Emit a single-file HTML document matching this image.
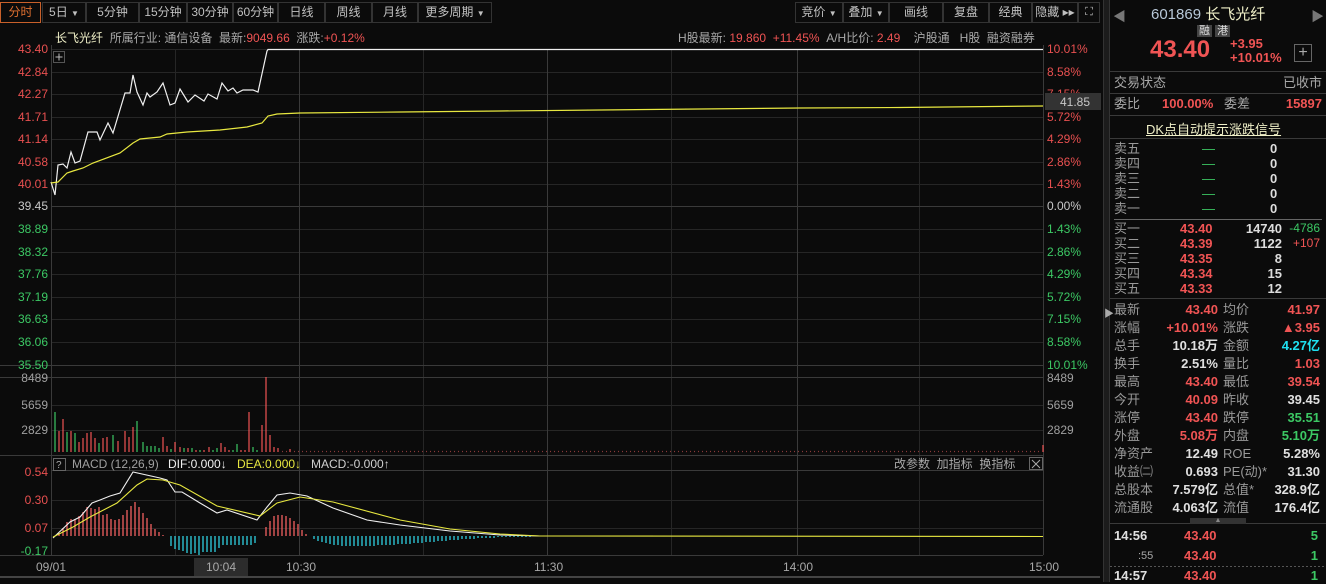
<!DOCTYPE html>
<html><head><meta charset="utf-8"><style>
*{margin:0;padding:0;box-sizing:border-box}
body{width:1326px;height:582px;background:#0b0b0b;overflow:hidden;font-family:"Liberation Sans","Noto Sans CJK SC",sans-serif;font-size:12px;color:#c8c8c8;position:relative}
.abs{position:absolute;white-space:nowrap}
.tab{position:absolute;top:2px;height:21px;border:1px solid #333;color:#c0c0c0;font-size:12px;line-height:19px;text-align:center}
.r{color:#f05454}.g{color:#3cc864}.c{color:#1fe0f0}.w{color:#e0e0e0}.gy{color:#a8a8a8}
#rp .row{position:absolute;left:1114px;width:208px;height:16px;font-size:13px;line-height:16px}
#rp .row span{position:absolute}
.hl{position:absolute;left:1110px;width:216px;height:1px;background:#3a3a3a}
</style></head><body>
<!-- toolbar -->
<div class="tab" style="left:0;width:41px;border-color:#c8602a;color:#e07030">分时</div>
<div class="tab" style="left:42px;width:44px">5日 <span style="font-size:8px">▼</span></div>
<div class="tab" style="left:86px;width:53px">5分钟</div>
<div class="tab" style="left:139px;width:48px">15分钟</div>
<div class="tab" style="left:187px;width:46px">30分钟</div>
<div class="tab" style="left:233px;width:45px">60分钟</div>
<div class="tab" style="left:278px;width:47px">日线</div>
<div class="tab" style="left:325px;width:47px">周线</div>
<div class="tab" style="left:372px;width:46px">月线</div>
<div class="tab" style="left:418px;width:74px">更多周期 <span style="font-size:8px">▼</span></div>
<div class="tab" style="left:795px;width:48px">竞价 <span style="font-size:8px">▼</span></div>
<div class="tab" style="left:843px;width:46px">叠加 <span style="font-size:8px">▼</span></div>
<div class="tab" style="left:889px;width:54px">画线</div>
<div class="tab" style="left:943px;width:46px">复盘</div>
<div class="tab" style="left:989px;width:43px">经典</div>
<div class="tab" style="left:1032px;width:46px">隐藏 ▸▸</div>
<div class="tab" style="left:1078px;width:22px;font-size:11px">⛶</div>
<!-- info row -->
<div class="abs" style="left:55px;top:29px;font-size:12px"><span style="color:#f0f0c8">长飞光纤</span> &nbsp;<span class="gy">所属行业: 通信设备 &nbsp;最新:</span><span class="r">9049.66</span> <span class="gy">&nbsp;涨跌:</span><span class="r">+0.12%</span></div>
<div class="abs" style="left:678px;top:29px;font-size:12px"><span class="gy">H股最新: </span><span class="r">19.860 &nbsp;+11.45%</span> &nbsp;<span class="gy">A/H比价: </span><span class="r">2.49</span> &nbsp;&nbsp;&nbsp;<span class="gy">沪股通 &nbsp;&nbsp;H股 &nbsp;融资融券</span></div>

<svg class="abs" style="left:0;top:0" width="1103" height="582" font-family="Liberation Sans" font-size="12">
<g stroke="#262626" stroke-width="1">
<line x1="51" y1="49.5" x2="1043" y2="49.5"/><line x1="51" y1="72.5" x2="1043" y2="72.5"/><line x1="51" y1="94.5" x2="1043" y2="94.5"/><line x1="51" y1="117.5" x2="1043" y2="117.5"/><line x1="51" y1="139.5" x2="1043" y2="139.5"/><line x1="51" y1="162.5" x2="1043" y2="162.5"/><line x1="51" y1="184.5" x2="1043" y2="184.5"/><line x1="51" y1="229.5" x2="1043" y2="229.5"/><line x1="51" y1="252.5" x2="1043" y2="252.5"/><line x1="51" y1="274.5" x2="1043" y2="274.5"/><line x1="51" y1="297.5" x2="1043" y2="297.5"/><line x1="51" y1="319.5" x2="1043" y2="319.5"/><line x1="51" y1="342.5" x2="1043" y2="342.5"/>
<line x1="51" y1="405.5" x2="1043" y2="405.5"/><line x1="51" y1="430.5" x2="1043" y2="430.5"/>
<line x1="51" y1="500.5" x2="1043" y2="500.5"/><line x1="51" y1="528.5" x2="1043" y2="528.5"/>
<line x1="175.5" y1="49" x2="175.5" y2="555"/><line x1="423.5" y1="49" x2="423.5" y2="555"/><line x1="671.5" y1="49" x2="671.5" y2="555"/><line x1="919.5" y1="49" x2="919.5" y2="555"/>
</g>
<g stroke="#3a3a3a" stroke-width="1">
<line x1="51" y1="206.5" x2="1043" y2="206.5"/>
<line x1="299.5" y1="49" x2="299.5" y2="555"/><line x1="547.5" y1="49" x2="547.5" y2="555"/><line x1="797.5" y1="49" x2="797.5" y2="555"/>
<line x1="0" y1="365.5" x2="1043" y2="365.5"/><line x1="0" y1="377.5" x2="1043" y2="377.5"/>
<line x1="0" y1="455.5" x2="1043" y2="455.5"/><line x1="51" y1="470.5" x2="1043" y2="470.5"/>
<line x1="0" y1="555.5" x2="1043" y2="555.5"/>
<line x1="51.5" y1="45" x2="51.5" y2="555"/><line x1="1043.5" y1="45" x2="1043.5" y2="555"/>
</g>
<line x1="0" y1="577" x2="1100" y2="577" stroke="#444" stroke-width="2"/>
<!-- + box -->
<rect x="53.5" y="51.5" width="11" height="11" fill="none" stroke="#555"/>
<path d="M59 53.5V60.5M55.5 57H62.5" stroke="#bbb"/>
<!-- left axis -->
<g text-anchor="end" fill="#e85050">
<text x="48" y="53">43.40</text><text x="48" y="76">42.84</text><text x="48" y="98">42.27</text><text x="48" y="121">41.71</text><text x="48" y="143">41.14</text><text x="48" y="166">40.58</text><text x="48" y="188">40.01</text>
</g>
<text x="48" y="210" text-anchor="end" fill="#c8c8c8">39.45</text>
<g text-anchor="end" fill="#3cc864">
<text x="48" y="233">38.89</text><text x="48" y="256">38.32</text><text x="48" y="278">37.76</text><text x="48" y="301">37.19</text><text x="48" y="323">36.63</text><text x="48" y="346">36.06</text><text x="48" y="369">35.50</text>
</g>
<!-- right axis -->
<g fill="#e85050"><text x="1047" y="53">10.01%</text><text x="1047" y="76">8.58%</text><text x="1047" y="98">7.15%</text><text x="1047" y="121">5.72%</text><text x="1047" y="143">4.29%</text><text x="1047" y="166">2.86%</text><text x="1047" y="188">1.43%</text></g>
<text x="1047" y="210" fill="#c8c8c8">0.00%</text>
<g fill="#3cc864"><text x="1047" y="233">1.43%</text><text x="1047" y="256">2.86%</text><text x="1047" y="278">4.29%</text><text x="1047" y="301">5.72%</text><text x="1047" y="323">7.15%</text><text x="1047" y="346">8.58%</text><text x="1047" y="369">10.01%</text></g>
<rect x="1045" y="93" width="56" height="17" fill="#333"/>
<text x="1060" y="106" fill="#c8c8c8">41.85</text>
<g fill="#a0a0a0"><text x="1047" y="382">8489</text><text x="1047" y="409">5659</text><text x="1047" y="434">2829</text></g>
<g text-anchor="end" fill="#a0a0a0"><text x="48" y="382">8489</text><text x="48" y="409">5659</text><text x="48" y="434">2829</text></g>
<g text-anchor="end"><text x="48" y="476" fill="#e85050">0.54</text><text x="48" y="504" fill="#e85050">0.30</text><text x="48" y="532" fill="#e85050">0.07</text><text x="48" y="555" fill="#3cc864">-0.17</text></g>
<!-- price lines -->
<polyline fill="none" stroke="#f0f0f0" stroke-width="1.2" points="51,182 55,195 58,165 63,164 67,168 71,152 75,163 80,161 88,132 97,132 100,140 108,123 113,133 125,93 130,93 133,75 137,92 143,105 147,93 150,97 157,92 163,83 170,105 175,103 180,89 188,102 195,95 204,101 208,94 217,99 222,83 228,91 233,88 237,93 243,90 253,90 258,92 267,51 268,49.5 1043,49.5"/>
<polyline fill="none" stroke="#e8e840" stroke-width="1.2" points="51,183 58,182 67,173 73,171 83,168 93,163 120,153 133,143 140,139 160,137 167,134 187,132 220,130 247,127 262,123 268,116 277,114 300,113 400,112 500,111 600,110 700,109 800,108 900,107.5 1043,106"/>
<!-- volume -->
<g stroke-width="1.2">
<path stroke="#3cc864" d="M55 452V412M67 452V432M75 452V433M99 452V443M113 452V435M137 452V421M143 452V442M147 452V446M151 452V446M155 452V446M159 452V448M171 452V449M184 452V448M192 452V448M200 452V450M213 452V450M217 452V448M233 452V450M237 452V444M253 452V447M257 452V450"/>
<path stroke="#f05454" d="M59 452V431M63 452V419M71 452V431M79 452V442M83 452V438M87 452V433M91 452V432M95 452V438M103 452V438M107 452V437M118 452V441M125 452V431M129 452V437M133 452V427M163 452V437M167 452V446M175 452V442M180 452V447M188 452V448M196 452V450M204 452V450M209 452V447M221 452V443M225 452V447M229 452V450M241 452V450M245 452V450M249 452V412M262 452V425M266 452V377M270 452V435M274 452V447M278 452V448M290 452V449M1043 452V445"/>
<line x1="282" y1="451.5" x2="1040" y2="451.5" stroke="#8a3a3a" stroke-dasharray="1 3"/>
</g>
<!-- MACD header -->
<rect x="53.5" y="458.5" width="12" height="12" fill="none" stroke="#666"/>
<text x="56" y="468" fill="#aaa" font-size="10">?</text>
<text x="72" y="468" fill="#a0a0a0">MACD (12,26,9)</text>
<text x="168" y="468" fill="#f0f0f0">DIF:0.000↓</text>
<text x="237" y="468" fill="#e8e840">DEA:0.000↓</text>
<text x="311" y="468" fill="#d0d0d0">MACD:-0.000↑</text>
<text x="894" y="468" fill="#a8a8a8" font-family="Liberation Sans,Noto Sans CJK SC">改参数 &nbsp;加指标 &nbsp;换指标</text>
<rect x="1029.5" y="457.5" width="13" height="12" fill="none" stroke="#666"/>
<path d="M1032 460L1040 468M1040 460L1032 468" stroke="#aaa"/>
<!-- MACD hist -->
<g stroke-width="1.3">
<path stroke="#f06060" d="M55 536V536M59 536V533M63 536V528M67 536V522M71 536V519M75 536V519M79 536V516M83 536V512M87 536V507M91 536V508M95 536V509M99 536V507M103 536V515M107 536V514M111 536V519M115 536V520M119 536V519M123 536V515M127 536V510M131 536V506M135 536V502M139 536V507M143 536V513M147 536V518M151 536V524M155 536V529M159 536V532M163 536V535M266 536V527M270 536V521M274 536V516M278 536V515M282 536V515M286 536V516M290 536V518M294 536V521M298 536V524M302 536V530M306 536V534"/>
<path stroke="#30d0e0" d="M171 536V546M175 536V549M179 536V550M183 536V551M187 536V553M191 536V554M195 536V553M199 536V555M203 536V552M207 536V552M211 536V552M215 536V552M219 536V548M223 536V545M227 536V545M231 536V545M235 536V545M239 536V545M243 536V545M247 536V545M251 536V545M255 536V543M314 536V539M318 536V541M322 536V542M326 536V543M330 536V544M334 536V545M338 536V545M342 536V546M346 536V546M350 536V546M354 536V546M358 536V546M362 536V546M366 536V546M370 536V546M374 536V546M378 536V545M382 536V545M386 536V545M390 536V545M394 536V545M398 536V544M402 536V544M406 536V544M410 536V544M414 536V543M418 536V543M422 536V543M426 536V542M430 536V542M434 536V542M438 536V541M442 536V541M446 536V541M450 536V540M454 536V540M458 536V540M462 536V539M466 536V539M470 536V539M474 536V539M478 536V538M482 536V538M486 536V538M490 536V538M494 536V538M498 536V537M502 536V537M506 536V537M510 536V537M514 536V537M518 536V537M522 536V537M526 536V537M530 536V537"/>
</g>
<polyline fill="none" stroke="#f0f0f0" stroke-width="1.1" points="53,538 70,522 80,517 92,503 100,500 110,496 120,493 133,472 160,478 167,480 175,492 182,492 200,503 217,513 227,510 257,520 267,507 277,495 290,493 307,496 333,508 367,520 400,525 450,531 500,535 540,536"/>
<polyline fill="none" stroke="#e8e840" stroke-width="1.1" points="53,537 73,527 90,517 117,503 137,485 147,479 163,480 180,485 217,506 260,516 277,503 300,497 333,502 400,520 450,529 500,534 540,536 1043,536.5"/>
<!-- time axis -->
<rect x="194" y="558" width="54" height="18" fill="#2c2c2c"/>
<g fill="#a8a8a8"><text x="36" y="571">09/01</text><text x="206" y="571">10:04</text><text x="286" y="571">10:30</text><text x="534" y="571">11:30</text><text x="783" y="571">14:00</text><text x="1029" y="571">15:00</text></g>
</svg>

<!-- divider -->
<div class="abs" style="left:1103px;top:0;width:7px;height:582px;background:#1c1c1c;border-left:1px solid #333;border-right:1px solid #333"></div>
<div class="abs" style="left:1104px;top:305px;color:#aaa;font-size:10px">▶</div>

<div id="rp">
<div class="abs" style="left:1113px;top:6px;color:#777;font-size:13px">◀</div>
<div class="abs" style="left:1311px;top:6px;color:#777;font-size:13px">▶</div>
<div class="abs" style="left:1151px;top:3px;font-size:15px"><span style="color:#b8c8d8">601869</span> <span style="color:#f0f0c8">长飞光纤</span></div>
<div class="abs" style="left:1197px;top:22px;font-size:11px;color:#ddd"><span style="background:#444;padding:0 2px">融</span> <span style="background:#444;padding:0 2px">港</span></div>
<div class="abs r" style="left:1150px;top:36px;font-size:24px;font-weight:bold">43.40</div>
<div class="abs r" style="left:1230px;top:37px;font-size:13px;font-weight:bold;line-height:14px">+3.95<br>+10.01%</div>
<div class="abs" style="left:1294px;top:44px;width:18px;height:18px;border:1px solid #666;color:#aaa;text-align:center;line-height:16px;font-size:16px">+</div>
<div class="hl" style="top:71px"></div>
<div class="row" style="top:75px"><span class="gy" style="left:0">交易状态</span><span class="gy" style="right:0">已收市</span></div>
<div class="hl" style="top:93px"></div>
<div class="row" style="top:96px"><span class="gy" style="left:0">委比</span><span class="r" style="left:48px;font-weight:bold">100.00%</span><span class="gy" style="left:110px">委差</span><span class="r" style="right:0;font-weight:bold">15897</span></div>
<div class="hl" style="top:115px"></div>
<div class="abs" style="left:1146px;top:119px;font-size:13px;color:#f0f0c8;text-decoration:underline">DK点自动提示涨跌信号</div>
<div class="hl" style="top:138px"></div>
<div style="position:absolute;left:1114px;top:141px;font-size:13px;line-height:15px;color:#999">卖五<br>卖四<br>卖三<br>卖二<br>卖一</div>
<div style="position:absolute;left:1202px;top:141px;font-size:13px;line-height:15px;color:#3cc864">—<br>—<br>—<br>—<br>—</div>
<div style="position:absolute;left:1270px;top:141px;font-size:13px;line-height:15px;color:#ddd;font-weight:bold">0<br>0<br>0<br>0<br>0</div>
<div class="hl" style="top:219px;left:1114px;width:208px;background:#666"></div>
<div style="position:absolute;left:1114px;top:221px;font-size:13px;line-height:15px;color:#999">买一<br>买二<br>买三<br>买四<br>买五</div>
<div style="position:absolute;left:1180px;top:221px;font-size:13px;line-height:15px;font-weight:bold" class="r">43.40<br>43.39<br>43.35<br>43.34<br>43.33</div>
<div style="position:absolute;right:44px;top:221px;font-size:13px;line-height:15px;color:#ddd;font-weight:bold;text-align:right">14740<br>1122<br>8<br>15<br>12</div>
<div style="position:absolute;right:6px;top:221px;font-size:12px;line-height:15px;text-align:right"><span class="g">-4786</span><br><span class="r">+107</span></div>
<div class="hl" style="top:298px"></div>
<div style="position:absolute;left:1114px;top:301px;font-size:13px;line-height:18px;color:#999">最新<br>涨幅<br>总手<br>换手<br>最高<br>今开<br>涨停<br>外盘<br>净资产<br>收益㈡<br>总股本<br>流通股</div>
<div style="position:absolute;left:1110px;width:108px;top:301px;font-size:13px;line-height:18px;font-weight:bold;text-align:right"><span class="r">43.40</span><br><span class="r">+10.01%</span><br><span class="w">10.18万</span><br><span class="w">2.51%</span><br><span class="r">43.40</span><br><span class="r">40.09</span><br><span class="r">43.40</span><br><span class="r">5.08万</span><br><span class="w">12.49</span><br><span class="w">0.693</span><br><span class="w">7.579亿</span><br><span class="w">4.063亿</span></div>
<div style="position:absolute;left:1223px;top:301px;font-size:13px;line-height:18px;color:#999">均价<br>涨跌<br>金额<br>量比<br>最低<br>昨收<br>跌停<br>内盘<br>ROE<br>PE(动)*<br>总值*<br>流值</div>
<div style="position:absolute;left:1230px;width:90px;top:301px;font-size:13px;line-height:18px;font-weight:bold;text-align:right"><span class="r">41.97</span><br><span class="r">▲3.95</span><br><span class="c">4.27亿</span><br><span class="r">1.03</span><br><span class="r">39.54</span><br><span class="w">39.45</span><br><span class="g">35.51</span><br><span class="g">5.10万</span><br><span class="w">5.28%</span><br><span class="w">31.30</span><br><span class="w">328.9亿</span><br><span class="w">176.4亿</span></div>
<div class="hl" style="top:523px"></div>
<div class="abs" style="left:1190px;top:518px;width:56px;height:6px;background:#333;color:#888;font-size:7px;text-align:center;line-height:6px">▲</div>
<div class="row" style="top:528px;font-weight:bold"><span class="w" style="left:0">14:56</span><span class="r" style="left:70px">43.40</span><span class="g" style="right:4px">5</span></div>
<div class="row" style="top:548px;font-weight:bold"><span class="gy" style="left:24px;font-weight:normal;font-size:11px">:55</span><span class="r" style="left:70px">43.40</span><span class="g" style="right:4px">1</span></div>
<div class="hl" style="top:566px;background:repeating-linear-gradient(90deg,#555 0 2px,transparent 2px 4px)"></div>
<div class="row" style="top:568px;font-weight:bold"><span class="w" style="left:0">14:57</span><span class="r" style="left:70px">43.40</span><span class="g" style="right:4px">1</span></div>
</div>
</body></html>
